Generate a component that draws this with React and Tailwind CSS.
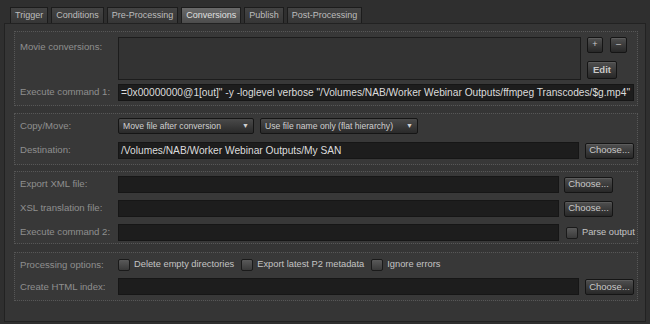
import React from 'react';

const tabs = ['Trigger', 'Conditions', 'Pre-Processing', 'Conversions', 'Publish', 'Post-Processing'];

function Label({ children }) {
  return <div className="w-[103px] shrink-0 pl-[5px] whitespace-nowrap text-[9.6px] text-[#8f8f8f]">{children}</div>;
}

function Field({ className = '', children }) {
  return (
    <div className={`h-[17px] bg-[#1d1d1d] border border-[#161616] flex items-center overflow-hidden whitespace-nowrap px-[2px] text-[10.2px] text-[#dcdcdc] ${className}`}>
      {children}
    </div>
  );
}

function Btn({ className = '', children }) {
  return (
    <div className={`flex items-center justify-center whitespace-nowrap border border-[#151515] rounded-[2px] bg-gradient-to-b from-[#505050] to-[#282828] text-[9.5px] text-[#c8c8c8] shadow-[inset_0_1px_0_#5c5c5c] ${className}`}>
      {children}
    </div>
  );
}

function Check({ label }) {
  return (
    <div className="flex items-center gap-[4px] whitespace-nowrap">
      <div className="w-[12px] h-[12px] rounded-[2px] border border-[#1a1a1a] bg-gradient-to-b from-[#5a5a5a] to-[#3a3a3a]" />
      <span className="text-[9.3px] text-[#c4c4c4]">{label}</span>
    </div>
  );
}

function Select({ className = '', children }) {
  return (
    <div className={`h-[16px] flex items-center justify-between whitespace-nowrap px-[4px] border border-[#151515] rounded-[2px] bg-gradient-to-b from-[#4a4a4a] to-[#2a2a2a] text-[8.6px] text-[#d0d0d0] ${className}`}>
      <span>{children}</span>
      <span className="text-[7px]">▼</span>
    </div>
  );
}

function Section({ className = '', children }) {
  return (
    <div className={`border border-dotted border-[#575757] bg-[#383838] ${className}`}>{children}</div>
  );
}

export default function App() {
  return (
    <div className="w-[650px] h-[324px] bg-[#2f2f2f] pt-[7px] px-[4px] font-['Liberation_Sans',sans-serif]">
      <div className="flex gap-[3px] pl-[6px] h-[16px]">
        {tabs.map((t) => (
          <div
            key={t}
            className={`px-[4px] flex items-center whitespace-nowrap border border-b-0 border-[#1c1c1c] text-[9px] ${
              t === 'Conversions'
                ? 'bg-gradient-to-b from-[#6a6a6a] to-[#4c4c4c] text-[#e0e0e0]'
                : 'bg-gradient-to-b from-[#444] to-[#363636] text-[#bdbdbd]'
            }`}
          >
            {t}
          </div>
        ))}
      </div>

      <div className="h-[299px] border border-[#222] bg-[#353535] pl-[9px] pr-[7px] pt-[7px] flex flex-col">
        <Section className="h-[75px] pt-[5px] pr-[3px] flex flex-col">
          <div className="flex">
            <div className="w-[103px] shrink-0 pl-[5px] pt-[3px] text-[9.6px] text-[#8f8f8f]">Movie conversions:</div>
            <div className="w-[463px] h-[43px] bg-[#333] border border-[#1c1c1c]" />
            <div className="ml-[6px] flex flex-col gap-[8px]">
              <div className="flex gap-[7px]">
                <Btn className="w-[16px] h-[16px] text-[9px]">+</Btn>
                <Btn className="w-[17px] h-[16px] text-[9px]">–</Btn>
              </div>
              <Btn className="w-[30px] h-[18px] font-bold">Edit</Btn>
            </div>
          </div>
          <div className="flex items-center mt-[4px]">
            <Label>Execute command 1:</Label>
            <Field className="flex-1">=0x00000000@1[out]" -y -loglevel verbose "/Volumes/NAB/Worker Webinar Outputs/ffmpeg Transcodes/$g.mp4"</Field>
          </div>
        </Section>

        <Section className="h-[52px] mt-[7px] pt-[4px] flex flex-col">
          <div className="flex items-center">
            <Label>Copy/Move:</Label>
            <Select className="w-[136px]">Move file after conversion</Select>
            <Select className="w-[158px] ml-[6px]">Use file name only (flat hierarchy)</Select>
          </div>
          <div className="flex items-center mt-[8px]">
            <Label>Destination:</Label>
            <Field className="w-[461px]">/Volumes/NAB/Worker Webinar Outputs/My SAN</Field>
            <Btn className="w-[49px] h-[16px] ml-[6px]">Choose...</Btn>
          </div>
        </Section>

        <Section className="h-[73px] mt-[6px] pt-[4px] flex flex-col gap-[7px]">
          <div className="flex items-center">
            <Label>Export XML file:</Label>
            <Field className="w-[441px]" />
            <Btn className="w-[49px] h-[16px] ml-[5px]">Choose...</Btn>
          </div>
          <div className="flex items-center">
            <Label>XSL translation file:</Label>
            <Field className="w-[441px]" />
            <Btn className="w-[49px] h-[16px] ml-[5px]">Choose...</Btn>
          </div>
          <div className="flex items-center">
            <Label>Execute command 2:</Label>
            <Field className="w-[441px]" />
            <div className="ml-[7px]">
              <Check label="Parse output" />
            </div>
          </div>
        </Section>

        <Section className="h-[49px] mt-[8px] pt-[5px] flex flex-col">
          <div className="flex items-center">
            <Label>Processing options:</Label>
            <div className="flex gap-[7px]">
              <Check label="Delete empty directories" />
              <Check label="Export latest P2 metadata" />
              <Check label="Ignore errors" />
            </div>
          </div>
          <div className="flex items-center mt-[6px]">
            <Label>Create HTML index:</Label>
            <Field className="w-[461px]" />
            <Btn className="w-[49px] h-[16px] ml-[6px]">Choose...</Btn>
          </div>
        </Section>
      </div>
    </div>
  );
}
